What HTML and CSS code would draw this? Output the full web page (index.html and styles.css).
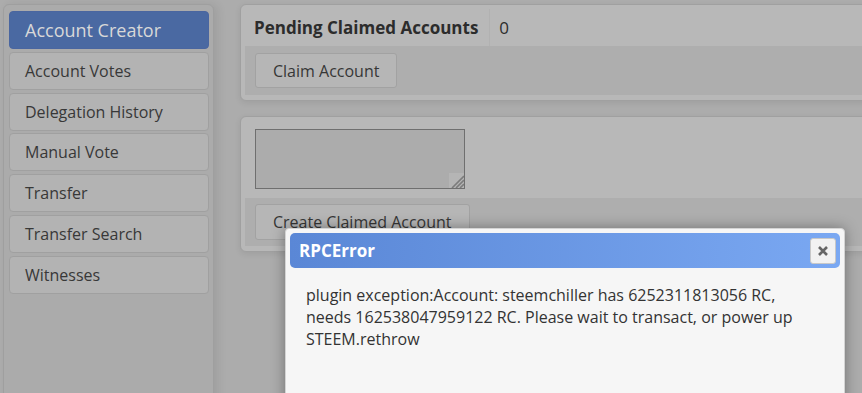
FILE: index.html
```html
<!DOCTYPE html>
<html lang="en">
<head>
<meta charset="utf-8">
<title>Account Creator</title>
<link rel="stylesheet" href="styles.css">
</head>
<body>
<div class="app">
  <nav class="sidebar">
    <a class="nav-item active">Account Creator</a>
    <a class="nav-item">Account Votes</a>
    <a class="nav-item">Delegation History</a>
    <a class="nav-item">Manual Vote</a>
    <a class="nav-item">Transfer</a>
    <a class="nav-item">Transfer Search</a>
    <a class="nav-item">Witnesses</a>
  </nav>
  <main class="content">
    <section class="panel">
      <div class="panel-head">
        <span class="head-label">Pending Claimed Accounts</span>
        <span class="head-value">0</span>
      </div>
      <div class="panel-actions"><button class="btn">Claim Account</button></div>
    </section>
    <section class="panel">
      <div class="panel-body">
        <div class="keys-wrap">
          <textarea class="keys"></textarea>
          <svg class="grip" width="15" height="15" viewBox="0 0 15 15"><rect width="15" height="15" fill="#b5b5b5"/><path d="M3 15 L15 3 M7 15 L15 7 M11 15 L15 11" stroke="#7c7c7c" stroke-width="1.6"/></svg>
        </div>
      </div>
      <div class="panel-actions"><button class="btn">Create Claimed Account</button></div>
    </section>
  </main>
</div>
<div class="dialog" role="dialog">
  <div class="dialog-title">
    <span class="dialog-name">RPCError</span>
    <button class="dialog-close" aria-label="close">
      <svg width="10" height="10" viewBox="0 0 10 10"><path d="M1 1 L9 9 M9 1 L1 9" stroke="#666" stroke-width="2.6"/></svg>
    </button>
  </div>
  <div class="dialog-body">
    <p class="dialog-msg">plugin exception:Account: steemchiller has 6252311813056 RC, needs 162538047959122 RC. Please wait to transact, or power up STEEM.rethrow</p>
  </div>
</div>
</body>
</html>
```
FILE: styles.css
```css
html, body {
  margin: 0;
  padding: 0;
  overflow: hidden;
  height: 100%;
}
body {
  background: #acacac;
  font-family: "Open Sans", "DejaVu Sans", sans-serif;
  font-size: 16px;
  color: #363636;
  position: relative;
}
.app {
  display: flex;
  align-items: flex-start;
  gap: 26px;
  padding: 4px 0 0 3px;
}
.sidebar {
  flex: none;
  width: 211px;
  box-sizing: border-box;
  min-height: 420px;
  background: #ababab;
  border: 1px solid #9f9f9f;
  border-radius: 6px;
  padding: 6px 4px 6px 5px;
  display: flex;
  flex-direction: column;
  gap: 2.8px;
  box-shadow: 4px 0 10px rgba(0,0,0,0.08);
}
.nav-item {
  display: flex;
  align-items: center;
  height: 38px;
  box-sizing: border-box;
  padding-left: 15px;
  background: #b3b3b3;
  border: 1px solid #a0a0a0;
  border-radius: 4px;
  color: #383838;
  text-decoration: none;
}
.nav-item.active {
  background: #4a69a2;
  border-color: #4a66a0;
  color: #d8d8d8;
  font-size: 18px;
}
.content {
  flex: none;
  width: 700px;
  display: flex;
  flex-direction: column;
  gap: 15px;
}
.panel {
  background: #b8b8b8;
  border: 1px solid #a0a0a0;
  border-radius: 6px;
  padding: 4px 4px 5px;
  box-shadow: 0 2px 6px rgba(0,0,0,0.08);
}
.panel-head {
  display: flex;
  align-items: center;
  height: 37px;
  font-size: 17px;
}
.head-label {
  font-weight: 700;
  color: #2c2c2c;
  padding: 0 11px 0 9px;
  height: 100%;
  display: flex;
  align-items: center;
  border-right: 1px solid #b1b1b1;
}
.head-value {
  padding-left: 9px;
  color: #2c2c2c;
}
.panel-actions {
  background: #aeaeae;
  padding: 7px 10px;
}
.panel-body {
  padding: 8px 10px 9px;
}
.keys-wrap {
  position: relative;
  width: 210px;
  height: 60px;
}
.keys {
  display: block;
  width: 210px;
  height: 60px;
  box-sizing: border-box;
  margin: 0;
  background: #acacac;
  border: 1px solid #6f6f6f;
  resize: none;
}
.grip {
  position: absolute;
  right: 1px;
  bottom: 1px;
}
.btn {
  font-family: inherit;
  font-size: 16px;
  color: #363636;
  height: 35px;
  padding: 0 17px;
  background: #b6b6b6;
  border: 1px solid #a2a2a2;
  border-radius: 3px;
}
.panel:nth-child(2) .panel-actions {
  padding: 6px 10px;
}
.panel:nth-child(2) .btn {
  height: 36px;
}
.dialog {
  position: absolute;
  left: 285px;
  top: 228px;
  width: 560px;
  height: 220px;
  box-sizing: border-box;
  background: #f6f6f6;
  border: 1px solid #d4d4d4;
  border-radius: 4px;
  padding: 4px;
  box-shadow: 0 0 14px rgba(0,0,0,0.35);
}
.dialog-title {
  height: 35px;
  box-sizing: border-box;
  border-radius: 5px;
  background: linear-gradient(to right, #5a87d6, #7aa8f2);
  display: flex;
  align-items: center;
  justify-content: space-between;
  padding: 0 4px 0 9px;
}
.dialog-name {
  color: #fff;
  font-weight: 700;
  font-size: 17px;
}
.dialog-close {
  width: 26px;
  height: 26px;
  padding: 0;
  display: flex;
  align-items: center;
  justify-content: center;
  background: #f2f2f2;
  border: 1px solid #c8c8c8;
  border-radius: 3px;
}
.dialog-body {
  padding: 16px 16px;
}
.dialog-msg {
  margin: 0;
  max-width: 505px;
  color: #333;
}
```
